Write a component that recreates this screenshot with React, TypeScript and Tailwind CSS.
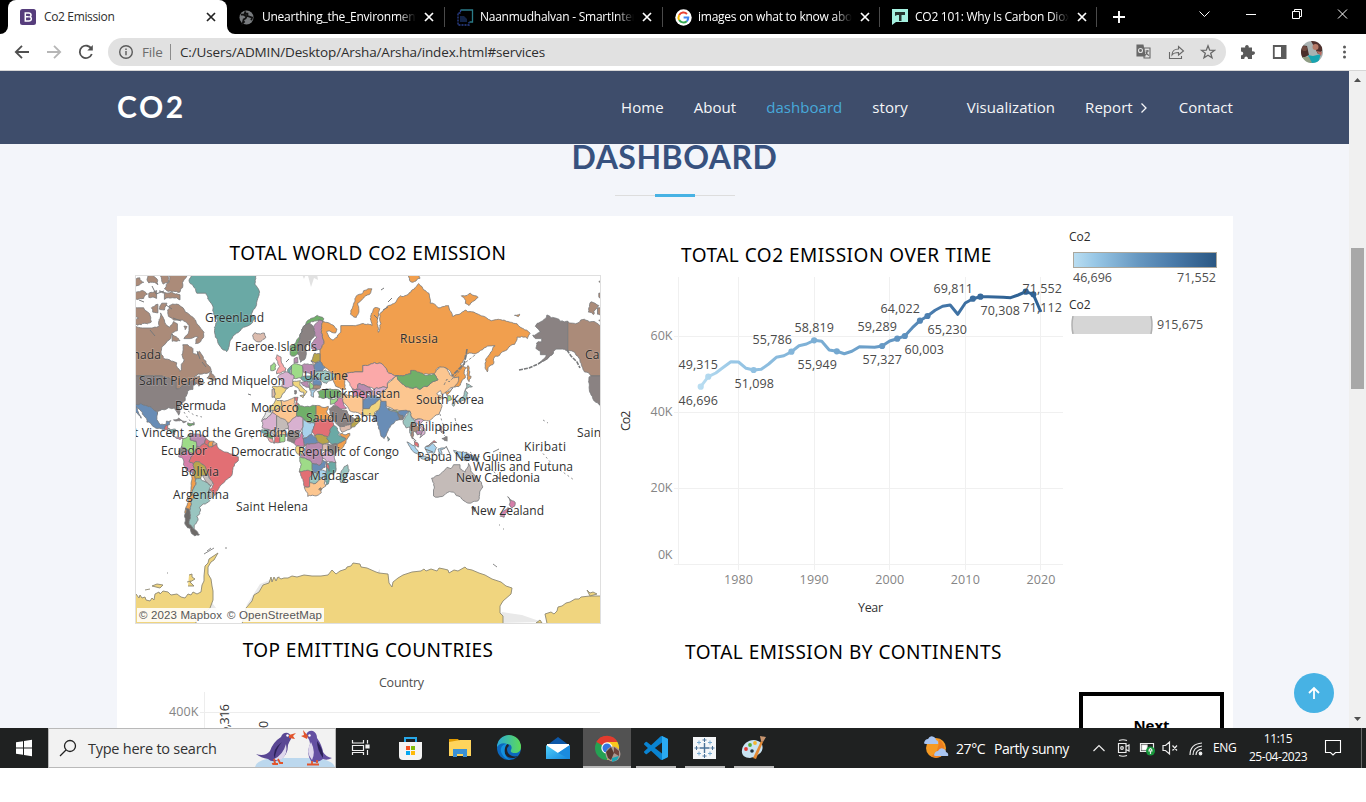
import type { ReactNode } from 'react';

const SEGOE = "font-['Open_Sans','Noto_Sans',sans-serif]";
const NOTO = "font-['Noto_Sans','Open_Sans',sans-serif]";

/* ---------- map data: colour + lon,lat ring ---------- */
const C = {
  brown: '#ab8b79', grey: '#8a8282', blue: '#698db6', teal: '#6aa9a5', orange: '#f19f4e',
  peach: '#fcc690', pink: '#fba9a9', green: '#70af69', red: '#e26f74', aqua: '#99c5c0',
  stone: '#c4bbb8', sand: '#f0d57f', lilac: '#d8b1d0', purple: '#b98bb0', lime: '#9edb88',
  sky: '#a8d2ec', rose: '#d57ea9', olive: '#b8a54b', blush: '#dcbcae',
};

const LAND: [string, string][] = [
  [C.brown, '-141,69.6 -135,69 -131,70 -128,70.2 -124,69.5 -119,69.3 -115,68.3 -109,67.8 -102,67.8 -98,68 -96,68.5 -95,71.8 -92,70 -88,68 -85,69.6 -82,69 -82,67 -86,66.3 -87,64.6 -94,61.5 -94.5,58.8 -92.5,57 -88,56.5 -82.5,55.2 -82,53 -80,51.3 -79,52 -79,54.5 -76.7,56.5 -78.5,58.8 -77.5,60.5 -77.8,62.4 -74,62.4 -70,61 -69.5,59 -67,58.5 -65,60 -63,58.5 -61.5,56.5 -59.5,54.8 -57,53.5 -56,52 -60,50.2 -66,50 -69,48.5 -65,49 -64.5,47.5 -64,46 -61,45.5 -65.5,43.5 -66.8,45 -70,46.5 -75,45 -79,43 -83,42 -83,46 -89,48 -95,49 -123,49 -128,51 -130.5,54.8 -135.5,59.5 -141,60.3'],
  [C.brown, '-61.5,66.5 -64,63.5 -68,62.8 -66,65 -72,64.5 -77,64.5 -73,67 -73,68.5 -78,70 -85,70 -89,71 -88,73.5 -81,73.7 -77,72.7 -73,71.5 -68,70 -67,69'],
  [C.brown, '-92,76.8 -86,76.3 -80,76.2 -78,77 -76,78.5 -72,79.5 -90,79.6 -88,78.3'],
  [C.brown, '-96,76.4 -90,76 -80,75.7 -80,74.7 -92,74.8 -92,76'],
  [C.brown, '-105,79 -100,78.8 -97,77.5 -104,77.8'],
  [C.brown, '-95,78.9 -90,79.2 -89,77.9 -93,77.6'],
  [C.brown, '-117,76 -109,76.5 -105,75.8 -108,75 -117,75.3'],
  [C.brown, '-117,78 -111,78.6 -108,77.9 -114,77.3'],
  [C.brown, '-104,76 -98,76.5 -98,75 -104,75.2'],
  [C.brown, '-118,73 -113,73 -108,73 -105,72 -102,69.5 -105,69 -113,68.6 -117,70 -112,70.5 -118,71.5'],
  [C.brown, '-125,72 -123,74.3 -117,73.5 -121,71.4'],
  [C.brown, '-102,73 -97,73.8 -97,71.8 -101,72'],
  [C.brown, '-94,74 -90,74 -92,72.5 -96,72.7'],
  [C.brown, '-86,66 -84,65.3 -80,63.8 -86,63.6'],
  [C.brown, '-77,68.3 -74.5,68.2 -76,67.3'],
  [C.brown, '-59.2,48 -55.7,51.5 -55.5,50 -53,48.5 -53.5,46.7 -56,47'],
  [C.teal, '-73,78.2 -70,77.4 -67,76 -60,76 -56,74 -54,71.5 -51,70 -53.5,68 -53,66 -51,63.5 -48,61 -44,59.8 -42.5,61.3 -41,64 -38,65.7 -31,68 -25,69 -22,70.5 -25,71.5 -22,73 -20,75 -19,76.5 -22,77.5 -20,79.8 -68,80.2'],
  [C.grey, '-168,65.6 -162,66.5 -166,68.3 -162,69.5 -157,71.3 -150,70.5 -141,69.7 -141,60.3 -146,60.8 -150,60.8 -152,59.2 -155,58 -160,56 -163,55 -159,57 -157.500,58.600 -162,58.6 -162,60 -165.500,61 -165,63 -161,63.500 -161,64.5 -166,64.5'],
  [C.grey, '-124.5,48.5 -123,49 -95,49 -89,48 -83,46 -83,42 -79,43 -75,45 -70,46.5 -67,45 -70,43.5 -70,41.7 -74,40.6 -76,37 -76,35 -81,31.5 -80.2,26.8 -81,25.2 -82.7,28 -84,30 -89,30.3 -91,29.2 -97,28 -97.3,26 -101,29.5 -106.5,31.8 -114.7,32.5 -117,32.6 -120.5,34.6 -124.2,40.5'],
  [C.blue, '-117,32.6 -114.7,32.5 -106.5,31.8 -101,29.5 -97.3,26 -97.8,22 -95,18.6 -91,18.7 -90.5,21 -87,21.4 -88,18.4 -91,17.8 -92,14.7 -96,15.8 -101,17.3 -105.5,20.3 -106,23 -109,26 -112.5,30 -114.6,31.6 -110,24 -110,23 -112,25.5 -115,28.5'],
  [C.red, '-92,14.7 -91,17.8 -89.2,17.8 -89,14'], [C.teal, '-89,16 -83.3,15 -84,11 -87,13'], [C.rose, '-86,11 -82,9 -79,9.5 -77.5,8 -80,7.3 -83,8.3'],
  [C.grey, '-85,21.9 -81,23.2 -75,20.8 -77.5,19.8 -79,21.8'], [C.green, '-74,19.8 -69,19.5 -69,18.3 -74,18.2'],
  [C.lime, '-77.5,8 -72,12 -72,7 -67.5,6 -67,1.5 -70,-4 -75,0 -79,1.5'],
  [C.purple, '-72,12 -68,11.5 -62,10.7 -60,8 -61,4.5 -65,1.5 -67,1.5 -67.5,6 -72,7'],
  [C.red, '-60,8 -57,6 -58,1.5 -61,4.5'], [C.orange, '-57,6 -54,6 -54.5,2 -58,2'], [C.blush, '-54,6 -51.5,4.2 -54.5,2'],
  [C.grey, '-79,1.5 -75,0 -79,-5 -81,-2'],
  [C.rose, '-79,-5 -75,0 -70,-4 -73,-9.5 -69.5,-11 -69,-15 -70,-18 -76,-14 -81,-6 -80,-3.5'],
  [C.red, '-70,-4 -67,1.5 -65,1.5 -61,4.5 -58,1.5 -54.5,2 -51.5,4.2 -50,0 -44,-2.5 -38.5,-4 -35,-6 -35,-9 -39,-14 -40,-20 -45,-23.5 -48.5,-27 -53,-33.5 -57.5,-30 -54,-26 -58,-20 -60,-15 -65,-10 -69.5,-11 -73,-9.5'],
  [C.olive, '-69.5,-11 -65,-10 -60,-15 -58,-19.5 -62.5,-20 -64,-22.5 -68,-22.7 -69.5,-17.5 -69,-15'],
  [C.stone, '-62.5,-20 -58,-20 -54.5,-25.5 -56,-27.3 -58,-26'], [C.stone, '-57.5,-30 -53,-33.5 -56,-35 -58.4,-34'],
  [C.orange, '-70,-18 -69.5,-17.5 -68,-22.7 -70,-30 -71.5,-40 -72,-46 -75.5,-46.5 -73.5,-37 -71.5,-30'],
  ['#6d6a68', '-75.5,-41.5 -73,-42 -72,-46 -73,-50 -69,-52.5 -65,-55 -68.5,-55.5 -71,-54.5 -75,-51'],
  [C.aqua, '-68,-22.7 -64,-22.5 -58,-26 -56,-27.3 -57.5,-30 -58.4,-34 -57,-37 -62,-39 -65,-41 -64,-42.5 -67,-46 -66,-48 -69,-50.5 -69,-52.5 -73,-50 -72,-46 -71.5,-40 -70,-30'],
  [C.blush, '-24,65.5 -22,66.4 -18,66 -15,66.3 -13.7,65 -18,63.4 -22.5,64'],
  [C.pink, '-5.5,50 1.3,51.2 1.7,52.7 0,53.5 -2,56 -2,57.6 -5,58.6 -6,57 -4.5,54.8 -3,53.5 -4.8,52'],
  [C.lime, '-10,51.6 -6.3,52.2 -6,54 -7.5,55.3 -10,54'],
  [C.green, '5,58.6 8,58 11,59 12,64 16,68.5 20,69.2 27,70 30,69.7 31,70.3 26,71.2 19,70 14,67.5 10,64 5,62'],
  [C.grey, '11,59 13,55.4 16,56.5 17,60.5 17.5,62 21,64 24,65.8 23,68 20,69.2 16,68.5 12,64'],
  [C.purple, '21.5,61 25,60.3 28,60.5 31,62.8 29,66.5 30,69.7 27,70 23,68 24,65.8 25.5,65 21.5,62.8'],
  [C.orange, '28,60.5 31,62.8 29,66.5 30,69.7 35,69.2 41,67.5 40,66.3 33,66.7 38,64 44,66.5 44,68.5 54,68.5 60,69 68,68.5 67,71 70,73 74,72.8 72,69 73,66.5 75,69 74,71.5 81,73.5 88,75 98,76.2 104,77.7 112,76 113,74 119,73 127,73.5 130,71 140,72.5 150,71.5 160,69.8 170,70 180,69 190,66.2 188,64.5 180,65 178,62.5 170,60 163,58 162,55 157,51 156,57 163,62 156,61.5 150,59.5 143,59.3 136,54.5 141,53 140,48 135,43.3 131,43 135,48.5 130.5,48.8 125,53 120,53.3 117,49.5 108,49.7 98,51.5 98,50 87,49.2 80,51 77,54 70,55.3 61,54 61,51 55,51 48,50 47,45 48,41.8 40,43.5 38,47 40,49.5 32,53 28,56'],
  [C.orange, '51.5,71.5 56,70.7 58,72 57,74 68,76.8 65,76.8 55,75'], [C.orange, '96,79.2 101,79.5 105,78.5 99,77.9'], [C.orange, '137,75.5 144,76 150,75.2 143,73.5 140,74'],
  [C.orange, '142,54 143.5,51 143,49 144.5,48.8 143,46 142,47 141.8,52'], [C.orange, '178,71.2 182,71.5 181,70.9'],
  [C.lime, '6,54 8,54.8 14,54 15,51 13,48 8,47.7 6,50'], [C.purple, '14,54 18.5,54.7 23.5,54 24,51 22.5,49 15,51'],
  [C.lilac, '-4.7,48.4 2.5,51 8,49 7,46 7,43.7 3,42.5 -1.7,43.3 -1,46'],
  [C.sand, '-9,43 -1.7,43.3 3,42.3 -0.5,39.5 -2,36.8 -5.6,36 -7.5,37.2 -7,41.8'], [C.blush, '-9,41.8 -7,41.8 -7.5,37.2 -9,37'],
  [C.sand, '7,46 13,46.5 12.5,44 18,40.5 16,38 15.5,40 10.5,43 7.5,44'], [C.sand, '12.5,38 15.5,38.2 15,36.7'], [C.grey, '8.3,41 9.7,41 9.5,39 8.5,39'],
  [C.teal, '5,51.5 6,54 4,52.8 3,51.2 6,50'], [C.purple, '8,55 8,57 10.5,57.6 11,55.2'], [C.olive, '21,56 24,59.3 28,59 28,56 24,55'], [C.blush, '21,56 26.5,55.5 24,54'],
  [C.blue, '23.5,54 28,56 32,53 30,51.5 24,51.7'], [C.aqua, '24,51 32,52 40,49.5 38,47 33,45 30,46 27,48 22.5,49'],
  [C.teal, '13,48 17,48.8 22.5,49 22,46 16,46'], [C.blue, '22,48 27,48 29,44 23,44'], [C.purple, '13,45.5 19,46 20,42.5 17,43'], [C.lime, '20,46 23,44 22.5,42 20,42'], [C.sky, '20,41.8 26,41.7 23.5,40.3 23,37 21,38'], [C.brown, '23,44 28.5,43.7 27.5,42 22.5,42'],
  [C.green, '26,40.5 31,41.3 36,42 42,41.5 44.5,39.5 44,37.2 36,36 30,36.3 27,37'],
  [C.pink, '48,50 55,51 61,51 61,54 70,55.3 77,54 80,51 87,49.2 83,47 80,45 80,42.5 70,42 66,43 58,45 56,41.5 53,42 51,45 49,46.5'],
  [C.purple, '56,41.5 58,45 66,43 68,41 67,37.5 61,41'], [C.rose, '53,42 56,41.5 61,41 66,38 62,35.5 57,38 54,37.3'], [C.lilac, '70,42 80,42.5 74,39.5 68,38'],
  [C.peach, '80,45 87,49.2 91,45 97,42.7 105,41.7 112,44 119,47 116,50 121,53.3 126,52.5 131,48 135,48.3 131,43 125,40 121.5,39 121,41 118,39 122.5,37 119.3,35 122,31 120,26 114,22.3 108,21.5 102,22 98,25 97.5,28 92,28 85,28.5 79,31.5 74,39.5 80,42.5'],
  [C.green, '87,49.2 98,50 98,51.7 108,49.7 116,50 119,47 112,44 105,41.7 97,42.7 91,45'],
  [C.blue, '74,34.5 79,34.5 79,31 81,29 88,27 97,28 92,22.5 88,21.7 82,16.5 80,13 77.5,8 73,16 72.5,20.5 69,22 70,26 74,31'],
  [C.sand, '61.5,25.2 67,25 70,24 70,27 74.5,32 74,36 70,33 66,29.7 61,29.7'], [C.blue, '61,35 65,37.3 71,38 74,37 70,33 66,29.7 61,29.7'],
  [C.grey, '88,26.5 92,25 92,22 89,22'], [C.aqua, '92,21 97,28 98.5,24 101,21 98,18 98.5,10 97.5,16.5 94.5,16'], [C.teal, '80,9.5 81.8,7.5 80.5,6'], [C.green, '80.5,30 88,27.8 88,26.5 81,28.7'],
  [C.brown, '98,19 101,19.5 105,16 102.5,12.5 100,13.5 99.5,9 102,6.2 99,8 98.5,14'], [C.lilac, '101,21 104,22.5 108,21.5 105.5,19 109,15 109,11.7 105,8.7 106,11 107.5,14 104,18'], [C.purple, '102.5,14 107.5,14 106,11 103,10.8'],
  [C.lime, '126.5,38 128.5,38 129.5,35.5 126.5,34.5'], [C.orange, '124.5,40 130.5,42.5 127.5,39.5 126,38'],
  [C.aqua, '141,45.3 145.5,43.3 140,41.5'], [C.aqua, '140,41.3 142,39.5 140.5,35.5 136,34 131,33.8 136,36 139,38'], [C.aqua, '130,33.5 132,33.5 131,31.2'],
  [C.peach, '44,39.5 48.5,38.5 54,37.3 57,38 61,36 61,29.7 61.5,25.2 57,27 50,30 46,33.5'],
  [C.rose, '42.5,37 45,36.5 46,33.5 48.5,30 44,29.3 39,33'], [C.lime, '36,36 42.5,37 39,33 36,32.5'],
  [C.grey, '35,29.5 39,32 44,29.3 48.5,28.5 51,25 55,22.5 52,19 47,17 43,17.3 39,21'], [C.blush, '43,17.3 47,17 52,19 52,15.7 45,12.8'], [C.olive, '52,19 55,22.5 56.5,24.5 59.7,22.3 55,17 52,16'],
  [C.sand, '-13,28 -9.8,31.5 -6,35.8 -2,35 -1.5,32.2 -8.5,28.5'], ['#e4e4e4', '-17,21 -13,28 -8.5,27.5 -13,23'],
  [C.peach, '-2,35 8.5,37 8,33 10,30 10,25 3,19.2 -8.5,27 -8.5,28.5 -1.5,32.2'], [C.red, '8.5,37 11,37 10,34 11.3,32.5 9,31'],
  [C.green, '10,24.5 10,30 11.3,33 20,31 25,31.7 25,20 15,23'], [C.orange, '25,31.7 34.5,31.2 33,28 36.5,22 25,22'],
  [C.lilac, '-17,21 -13,23 -8.5,27 -5.5,25 -5.5,15.5 -12,15 -16.5,16'], [C.stone, '-5.5,25 3,19.2 4,16 -3,14 -6,10.5 -11.5,12.5 -12,15 -5.5,15.5'],
  [C.lilac, '3,19.2 10,24.5 15,23 15,17 13,13.7 4,13.5 3.5,16'], [C.sky, '15,23 24,19.5 22,13 15,8 14,13 15,17'],
  [C.red, '25,22 36.5,22 38.5,18 36,13 34,9.5 24,10 22,13 24,19.5'], [C.teal, '36,13 38.5,18 43,12.5 42,11 48,8 42,4.2 36,4.5 33,8'], [C.orange, '43,11.5 51,12 48,4.5 42,-1.5 41,3.5 48,8'],
  [C.teal, '-17,14.7 -12,15 -11.5,12.5 -16.5,12.3'], [C.green, '-15,11 -11.5,12.5 -8,10 -8.5,7.5 -13,9'], [C.pink, '-13,9 -8.5,7.5 -7.5,4.5 -11.5,6.7'], [C.red, '-8,10 -3,10 -3,5 -7.5,4.5'], [C.peach, '-6,10.5 -3,14 1,13 2,11'], [C.lime, '-3,11 1,11 1,6 -3,5'], [C.grey, '2.7,6.5 4,13.5 13,13.7 12,8 8,4.5'],
  [C.rose, '8,4.5 14,13 15,8 16,2.2 10,2.3'], [C.blue, '15,8 22,11 27,5 18,4 16,3'], [C.olive, '24,10 34,9.5 33,8 35,5 30,3.7 27,5'],
  [C.sand, '10,2.3 16,2 18,4 14,-4.5 11,-4 9,-1'], [C.purple, '18,4 27,5 31,3 29,-3 30,-8 28,-12.5 22,-11 18,-8 12.5,-6 16,-3'],
  [C.lime, '12.5,-6 18,-8 22,-11 22,-17.5 12,-17.2 13.5,-12'], [C.red, '12,-17.2 23.5,-17.7 20,-22 20,-28 16,-28.5 14,-22'], [C.aqua, '20,-22 23.5,-17.7 26,-18 29,-22 25,-25.5 20,-26'],
  [C.peach, '16,-28.5 20,-28 20,-25 25,-25.5 29,-22.3 31.5,-23 32.5,-27.5 29,-32 25,-34 18.5,-34.3'], ['#b18352', '27,-29.5 28.5,-28.6 29.2,-29.6 28,-30.5'],
  [C.blue, '22,-11 28,-12.5 30,-8.5 33,-10 32,-14 28,-17 23.5,-17.7 22,-15'], [C.lilac, '30,-3 34,-1 39,-5 40.3,-10.5 33,-10 30,-7'], [C.grey, '34,4 41,3.8 41,-2 39,-4.6 34,-1'], [C.blush, '30,3.5 34,4 34,-1 30,-1'], [C.teal, '33,-11.5 40.3,-10.5 40.5,-15 35,-20 35,-24 32.5,-27 31.5,-22 33,-17'], [C.sky, '25,-17.8 30,-16 33,-17 31.5,-22 28,-21.5'], [C.red, '33,-10 35,-14 35,-17 33,-14'],
  [C.aqua, '49.3,-12 50.3,-15.5 47,-25 44,-25 43.5,-22 44.5,-16.5'],
  [C.sky, '109,1.5 112,1.7 115,4.3 118,1 116,-3.5 111,-3.3'], [C.red, '110,2 115,5 118,5 116,6.5 112,3'], [C.sky, '95,5.5 99,3 104,-2.5 106,-5.8 101,-3 97,2'], [C.red, '100.5,6.5 103,5 104,1.5 101,3'], [C.sky, '105,-6.2 114,-7.5 114,-8.5 106,-7.3'], [C.sky, '119,0 125,1.3 121,-0.5 122.5,-4.5 120,-3 119.5,-5.5'],
  [C.sky, '131,-1 141,-2.6 141,-9 137,-8 133,-4'], [C.blue, '141,-2.6 146,-5 150.5,-10.5 146,-8.3 141,-9'], [C.rose, '120.5,18.3 122,17 121.5,14 124,12.5 120.5,14'], [C.grey, '122,8 126,9.5 126,6 124,6.5'],
  [C.stone, '114,-22 117,-20.5 122,-18 126,-14 129,-15 131,-12 136,-12 136,-15 140,-17.5 142.5,-11 146,-18.5 150,-23 153.5,-28 150,-37 144,-38.5 140,-37.5 136,-34.5 131,-31.5 125,-32.5 119,-34.8 115.5,-34 115.5,-30'], ['#817b78', '145,-41 148,-41 147,-43.5'],
  ['#6d6a68', '172.7,-34.5 175,-36.5 174.5,-37'], [C.rose, '175,-36.5 178.5,-38 176,-41.5 174,-39.5'], [C.rose, '173,-41 174,-42 170,-46.5 167,-46'], [C.rose, '164,-20 167,-22 166,-22.3'],
];

const S = 466.8 / 360;
const px = (lon: number) => 283.7 + lon * S;
const py = (lat: number) => 449 - (466.8 / (2 * Math.PI)) * Math.log(Math.tan(Math.PI / 4 + (lat * Math.PI) / 360));
const noise = (a: number, b: number) => {
  const v = Math.sin(a * 12.9898 + b * 78.233) * 43758.5453;
  return v - Math.floor(v) - 0.5;
};

type Pt = [number, number];
/* Roughens an edge; both neighbours of a shared border get the same points. */
function split(a: Pt, b: Pt, depth: number): Pt[] {
  const dx = Math.abs(b[0] - a[0]);
  const dy = Math.abs(b[1] - a[1]);
  const len = Math.sqrt(dx * dx + dy * dy);
  if (depth === 0 || len < 2.6) return [a];
  const k = Math.min(len * 0.32, 4);
  const m: Pt = [
    (a[0] + b[0]) / 2 + noise(a[0] + b[0], a[1] + b[1]) * k,
    (a[1] + b[1]) / 2 + noise(a[1] + b[1], a[0] + b[0]) * k,
  ];
  return [...split(a, m, depth - 1), ...split(m, b, depth - 1)];
}
function ring(s: string) {
  const pts = s.split(' ').map((p): Pt => {
    const [lon, lat] = p.split(',').map(Number);
    return [px(lon), py(lat)];
  });
  const straight = (a: Pt, b: Pt) => a[1] === b[1] || a[0] === b[0];
  const out = pts.flatMap((p, i) => {
    const q = pts[(i + 1) % pts.length];
    return straight(p, q) ? [p] : split(p, q, 4);
  });
  return 'M' + out.map((p) => p[0].toFixed(1) + ' ' + p[1].toFixed(1)).join('L') + 'Z';
}

const MAP_LABELS: [string, number, number, number][] = [
  ['Greenland', 205, 322, 59], ['Faeroe Islands', 235, 351, 82], ['Russia', 400, 343, 38], ['Canada', 118, 359, 43], ['Canada', 585, 359, 43],
  ['Saint Pierre and Miquelon', 139, 385, 146], ['Ukraine', 304, 380, 44], ['Turkmenistan', 322, 398, 78], ['South Korea', 416, 404, 68],
  ['Bermuda', 175, 410, 51], ['Morocco', 251, 412, 48], ['Saudi Arabia', 306, 422, 72], ['Philippines', 410, 431, 63],
  ['Saint Vincent and the Grenadines', 110, 437, 190], ['Saint Vincent and the Grenadines', 577, 437, 190], ['Kiribati', 524, 451, 42],
  ['Ecuador', 161, 455, 46], ['Democratic Republic of Congo', 231, 456, 168], ['Papua New Guinea', 417, 461, 105], ['Wallis and Futuna', 473, 471, 100],
  ['Bolivia', 181, 476, 38], ['Madagascar', 310, 480, 69], ['New Caledonia', 456, 482, 84], ['Argentina', 173, 499, 56], ['New Zealand', 471, 515, 73], ['Saint Helena', 236, 511, 72],
];

function WorldMap() {
  return (
    <svg viewBox="136 276 464 347" width="464" height="347" className="block bg-white">
      <g id="land" stroke="#77797b" strokeWidth="0.8" strokeLinejoin="round">
        {LAND.map(([fill, s], i) => <path key={i} d={ring(s)} fill={fill} />)}
        <path d="M444 385l3-6 2 3 8-8 9-12 9-7M455 418l1 5 3 4" fill="none" strokeDasharray="3 1.500" />
        <path d="M519 370l10-2 9-4 8-5 7-6M567 350l4 6 6 6 3 6" fill="none" strokeDasharray="4 1" strokeWidth="1.600" />
        <path d="M467 349l-1 7-2 8-6 6-6 6" fill="none" strokeWidth="1.600" strokeDasharray="5 1" />
        <path d="M182 404l6 7 6 4 8 2M251 437l2 3M470 452l5 4 6 1M490 469l8 6M500 470l3 2M184 412l5 8 8 4M440 414l2 8 3 6M441 432l5 5M540 450l12 14M560 470l14 10M543 420l5 3" fill="none" strokeDasharray="2 2.600" />
        <path d="M152 286l4 8 8-3M166 305l6 4M150 330l5 6M173 318l8 3M139 300l5 2M197 351l3 8M202 362l4 5M392 298l-4 4M383 310l5-3M374 315l4 4M381 290l3-2M275 348l1 2M286 362l3-3M296 348l2-4M300 334l3-3M248 394l3 1M406 559l0 0M493 452l6-3M425 449l8 3M446 446l4 8M461 457l8 1" fill="none" strokeWidth="1" />
      </g>
      <use href="#land" x="466.8" />
      <use href="#land" x="-466.8" />
      <path d="M300 270l4 9 3-7 4 15 3-9 4 2-2-12z" fill="#e2e2e2" />
      <path d="M192 612l15-16 12 16zM246 606l14-22 20-8 0 10zM495 623l7-11 20 3 20 7zM376 574l4-5v8z" fill="#e9e9e9" />
      <g fill={C.sand} stroke="#8d8873" strokeWidth="0.9" strokeLinejoin="round">
        <path d="M130 624V593l4 3 2-2 3 4 1-3 2 3 3-1 1 3 4 1 2-3 2 2 1-6 4-2 1 2 3-3 5 1 3 3 6-1 4 3 4 1 3-4 3 1 2-3 4 2 4-2 1-7 2-4 0-5 1-10 3-3 1-4 6-4 3-2-4 7-3 2-3 5 0 7 3 5 1 7 1 5 0 9-3 8-6 6-8 6v10z" />
        <path d="M246 608l6-7 2-6 5-3 4-7 6-2 2-6 1 5 2-5 2 4 2-4 3 2 3-1 4 0 4-2 5 1 7-2 8 1 9 0 7-1 4-5 4 4 4-3 6-2 1-2 4-1 2-3 7 1 1 3 6 1 9 4 3 1 9 1 1 9 3 4 1-5 5-4 5-3 9-3 9-1 3-2 2 2 5-2 6 2 2-3 5 1 4 1 1 3 5-3 4 1 7-4 2 2 5 1 7 3 6 2 7 4 9 3 5 4 6 2-1 6-8 7-3 5 0 7 3 3 0 8-2 8H240z" />
        <path d="M548 628l-3-14 6-2 3 2 3-3 1-4 4-1 4-3 4-1 5-3 4 0 2-2 9-1 12 0v36zM536 623l4-3 2 3z" />
        <path d="M152 586l5-2 6 1-3 3zM587 590l3 3 3-1 4 2-7 2zM189 575l3-1 0 3 3 2-5 3 4 4-6 0M187 582l4-1M145 590l5-1" fill={C.sand} />
      </g>
      <path d="M204 554l10-6M207 551l4-3M225 548l2 0M493 564l4 3M167 573h1M499 525h1M503 529h1" stroke="#8b8b8b" fill="none" />
      <g className="font-['Open_Sans','Noto_Sans',sans-serif] text-[12px]" fill="#2f2f2f" stroke="#ffffff" strokeOpacity="0.2" strokeWidth="1.300" paintOrder="stroke">
        {MAP_LABELS.map(([t, x, y, w], i) => <text key={i} x={x} y={y} textLength={w}>{t}</text>)}
      </g>
      <rect x="137" y="608" width="187" height="14" fill="#fff" fillOpacity="0.88" />
      <g className="font-['Liberation_Sans',sans-serif] text-[11.5px]" fill="#575757">
        <text x="139" y="619" textLength="83">© 2023 Mapbox</text>
        <text x="227" y="619" textLength="95">© OpenStreetMap</text>
      </g>
    </svg>
  );
}

/* line heights, one entry per year from 1975 */
const SERIES = [386.7, 376.7, 373, 367.3, 361.7, 362, 368.3, 370, 369.3, 364, 357.3, 355.7, 351.7, 345.7, 344, 340.3, 341.3, 350, 351.3, 353.7, 351.3, 346.7, 347, 347.3, 346, 341, 338.7, 336, 327.7, 320.7, 316, 310.3, 306.3, 305, 314.3, 303, 298.7, 296.7, 296.7, 297, 297.3, 297.7, 295, 291.7, 294.3, 312];
const YX = (i: number) => 700.7 + i * 7.56;
const MARKS = [0, 1, 7, 12, 15, 18, 24, 26, 27, 29, 30, 36, 37, 43, 44];
const POINT_LABELS: [string, number, number][] = [
  ['49,315', 678.5, 369], ['46,696', 678.5, 405], ['51,098', 734.5, 388], ['55,786', 752.5, 344], ['58,819', 794.5, 332], ['55,949', 797.5, 369],
  ['57,327', 862.5, 364], ['59,289', 857.5, 331], ['60,003', 904.5, 354], ['64,022', 880.5, 313], ['65,230', 927.5, 334], ['69,811', 933.5, 293],
  ['70,308', 980.5, 315], ['71,552', 1022.5, 293], ['71,112', 1022.5, 312],
];

function LineChart() {
  return (
    <svg viewBox="610 270 460 360" width="460" height="360" className="block">
      <defs>
        <linearGradient id="trend" gradientUnits="userSpaceOnUse" x1="700" y1="0" x2="1041" y2="0">
          <stop offset="0" stopColor="#b9ddf1" /><stop offset="0.1" stopColor="#98c7e6" /><stop offset="0.4" stopColor="#74a8d0" />
          <stop offset="0.6" stopColor="#5f92bf" /><stop offset="0.7" stopColor="#4577a9" /><stop offset="0.9" stopColor="#2f6294" /><stop offset="1" stopColor="#2f6294" />
        </linearGradient>
      </defs>
      <path d="M678.5 277V564.5M738.5 277V570M814.5 277V570M889.5 277V570M965.5 277V570M1040.5 277V570M674 336.5H1063M674 412.5H1063M674 488.5H1063M674 564.5H1063" stroke="#f0f0f0" fill="none" />
      <polyline points={SERIES.map((y, i) => YX(i).toFixed(1) + ',' + y).join(' ')} fill="none" stroke="url(#trend)" strokeWidth="3" strokeLinejoin="round" />
      {MARKS.map((i) => <circle key={i} cx={YX(i)} cy={SERIES[i]} r="3.1" fill="url(#trend)" />)}
      <g className="font-['Open_Sans','Noto_Sans',sans-serif] text-[12.5px]">
        <g fill="#4a4a4a">{POINT_LABELS.map(([t, x, y]) => <text key={t} x={x} y={y} textLength="39.5">{t}</text>)}</g>
        <g fill="#858585">
          <text x="650.5" y="340" textLength="22">60K</text><text x="650.5" y="416" textLength="22">40K</text>
          <text x="650.5" y="492" textLength="22">20K</text><text x="658" y="559" textLength="14.5">0K</text>
          {[1980, 1990, 2000, 2010, 2020].map((y, i) => <text key={y} x={724 + i * 75.6} y="584" textLength="29">{y}</text>)}
        </g>
        <text x="858" y="612" textLength="25" fill="#333">Year</text>
        <text transform="translate(630 431) rotate(-90)" textLength="20.5" fill="#333">Co2</text>
      </g>
    </svg>
  );
}

/* ---------- browser chrome ---------- */
function Cross({ c }: { c: string }) {
  return <svg width="10" height="10" viewBox="0 0 10 10" className="shrink-0"><path d="M1 1l8 8M9 1L1 9" stroke={c} strokeWidth="1.7" /></svg>;
}

function Tab({ icon, title, width }: { icon: ReactNode; title: string; width: string }) {
  return (
    <div className={`flex h-full items-center ${width}`}>
      <div className="ml-3 w-4">{icon}</div>
      <div className={`ml-[7px] w-[154px] overflow-hidden whitespace-nowrap text-[12px] tracking-[-0.25px] text-white [mask-image:linear-gradient(to_right,black_88%,transparent)] ${SEGOE}`}>{title}</div>
      <div className="ml-2"><Cross c="#fff" /></div>
      <div className="ml-auto h-5 w-px bg-[#4a4a4a]" />
    </div>
  );
}

function TabStrip() {
  return (
    <div className="flex h-[34px] items-center bg-black">
      <div className="h-full w-2 bg-white"><div className="h-full rounded-br-lg bg-black" /></div>
      <div className={`flex h-full w-[219px] items-center rounded-t-lg bg-white pl-3 text-[12px] tracking-[-0.35px] text-[#2e2e2e] ${SEGOE}`}>
        <svg width="16" height="16" viewBox="0 0 16 16"><rect width="16" height="16" rx="2.5" fill="#563d7c" /><path d="M5.3 4h3.4c3 0 3 3.6.6 3.8 3 .2 2.600 4.200-.5 4.200H5.300zM5.300 7.700h3.500" fill="none" stroke="#fff" strokeWidth="1.5" /></svg>
        <span className="ml-2 w-[154px]">Co2 Emission</span><span className="ml-[8px]"><Cross c="#222" /></span>
      </div>
      <div className="h-full bg-white">
        <div className="flex h-full rounded-bl-lg bg-black">
          <Tab width="w-[218px]" title="Unearthing_the_Environment" icon={<svg width="15" height="15" viewBox="0 0 16 16"><circle cx="8" cy="8" r="7.500" fill="#787b7e" /><path d="M2 5l3 0 3 2-1 2-2 1-1 4 2-2M7 1.500l-1 2.500 3 0 0 2 2 1 3 1-1 3" stroke="#111" strokeWidth="1.900" fill="none" /></svg>} />
          <Tab width="w-[218px]" title="Naanmudhalvan - SmartInter" icon={<svg width="17" height="17" viewBox="0 0 17 17" fill="none"><path d="M3.500 1h12v12h-3" stroke="#2b7b88" strokeWidth="1.300" /><path d="M3.500 1v3H1v12h11v-3" stroke="#2c4291" strokeWidth="1.300" strokeDasharray="2 1" /><path d="M3 7h4l3 3v3H3z" fill="#132346" /></svg>} />
          <Tab width="w-[217px]" title="images on what to know abo" icon={<svg width="17" height="17" viewBox="0 0 17 17" fill="none"><circle cx="8.500" cy="8.500" r="8.200" fill="#fff" /><path d="M12 5A5 5 0 0 0 4.200 6" stroke="#ea4335" strokeWidth="2" /><path d="M4.200 6a5 5 0 0 0 0 5" stroke="#fbbc05" strokeWidth="2" /><path d="M4.200 11a5 5 0 0 0 7.600 1.200" stroke="#34a853" strokeWidth="2" /><path d="M11.800 12.200c1.300-1.200 1.500-2.200 1.500-3.600H8.600" stroke="#4285f4" strokeWidth="2" /></svg>} />
          <Tab width="w-[217px]" title="CO2 101: Why Is Carbon Diox" icon={<svg width="16" height="16" viewBox="0 0 16 16"><path d="M0 0h16v13H4l-4 3z" fill="#a5f1e0" /><path d="M3 3h10v3h-3.500v6H7V6H5l-2 1z" fill="#26352f" /></svg>} />
        </div>
      </div>
      <svg width="269" height="34" viewBox="0 0 269 34" className="ml-auto" stroke="#fff" fill="none">
        <path d="M16 17h12M22 11v12" strokeWidth="1.900" /><path d="M102.500 11.500l5 5 5-5M149 14.500h10" />
        <path d="M195.500 11.500h7v7h-7zM197.500 11.500v-2h7v7h-2M241 9.500l9 9M250 9.500l-9 9" />
      </svg>
    </div>
  );
}

function Toolbar() {
  return (
    <div className="flex h-[37px] items-center border-b border-[#d6d6d6] bg-white">
      <svg width="108" height="36" viewBox="0 0 108 36" fill="none" strokeWidth="1.800">
        <path d="M29 18H16.500M22 11.800L15.800 18l6.200 6.200" stroke="#505050" /><path d="M47 18h12.500M54 11.800l6.200 6.200-6.200 6.200" stroke="#b6b6b6" />
        <path d="M91.500 15a6.200 6.200 0 1 0 .3 5" stroke="#505050" /><path d="M92.800 11v5.500h-5.500z" fill="#505050" />
      </svg>
      <div className={`flex h-7 w-[1118px] items-center rounded-full bg-[#e1e1e1] pl-[11px] pr-[10px] text-[14px] text-[#2d2d2d] ${SEGOE}`}>
        <svg width="14" height="14" viewBox="0 0 14 14" fill="none" stroke="#5b5b5b" strokeWidth="1.400"><circle cx="7" cy="7" r="6.300" /><path d="M7 6v4.300M7 3.400v1.500" /></svg>
        <span className="ml-[9px] w-[21px] text-[13.500px] tracking-[-0.2px] text-[#6c6c6c]">File</span>
        <span className="ml-[7px] h-4 w-px bg-[#8c8c8c]" />
        <span className="ml-[9px] whitespace-nowrap text-[13.5px] tracking-[-0.14px]">C:/Users/ADMIN/Desktop/Arsha/Arsha/index.html#services</span>
        <svg width="80" height="18" viewBox="0 0 80 18" className="ml-auto" fill="none" stroke="#686868" strokeWidth="1.100">
          <path d="M1 2h6l2 11H1z" fill="#686868" /><path d="M8 5h6v10H8zM9.500 8h3.500M11.200 7v1.500c0 1.500-1 3-2 3.500M9.800 9c1 2 2 3 3.200 3.500" /><circle cx="4.500" cy="7.500" r="2" stroke="#e1e1e1" />
          <path d="M33.500 9v6.500h12V13M36 12c0-4 3-6 6.500-6V3.500L47.500 8l-5 4V9.500c-3 0-5 .5-6.500 2.500z" />
          <path d="M72 2.800l1.700 4.400 4.700.2-3.700 2.900 1.300 4.500-4-2.600-4 2.600 1.300-4.500-3.700-2.900 4.700-.2z" strokeWidth="1.300" />
        </svg>
      </div>
      <svg width="140" height="36" viewBox="0 0 140 36">
        <path d="M16 13.500h3.200c-1-3.500 4.500-3.500 3.500 0h3.300v4c4-1 4 4 0 3.500V25h-4c.3-3.500-4-3.500-3.700 0H15v-3.800c3 .2 3-3.800 0-3.800v-4z" fill="#5a5a5a" />
        <path d="M47.800 12h11.800v12H47.800z" fill="none" stroke="#5a5a5a" strokeWidth="1.800" /><path d="M55 12h5v12h-5z" fill="#5a5a5a" />
        <clipPath id="face"><circle cx="86" cy="18" r="11" /></clipPath>
        <g clipPath="url(#face)"><path d="M75 7h22v22H75z" fill="#a9b2b2" /><path d="M75 11l6 1 2 9-8 4z" fill="#4a2e2a" /><circle cx="78.500" cy="14.500" r="2.600" fill="#6f4a40" /><path d="M85 7h11v10l-4 3z" fill="#50302c" /><circle cx="89.500" cy="13" r="3" fill="#b67a68" /><path d="M82 21l5 1 8-2-3 9H84z" fill="#18a4b0" /><path d="M76 23l7 0 3 6H76z" fill="#8f9d83" /><path d="M90 17l6 1-1 4z" fill="#b66a60" /></g>
        <g fill="#5a5a5a"><circle cx="118.500" cy="13" r="1.500" /><circle cx="118.500" cy="18" r="1.500" /><circle cx="118.500" cy="23" r="1.500" /></g>
      </svg>
    </div>
  );
}

/* ---------- page ---------- */
function SiteHeader() {
  return (
    <header className="flex h-[73px] shrink-0 items-center bg-[#3e4d6b] pl-[117px] pr-[116px] text-[15px] font-medium tracking-[0.05px] text-[#f5f6f8] font-['Open_Sans',sans-serif]">
      <span className="-mt-[3px] mr-auto text-[30px] font-bold tracking-[2.6px] text-white font-['Lato',sans-serif]">CO2</span>
      <span>Home</span><span className="ml-[30px]">About</span><span className="ml-[30px] text-[#47a9da]">dashboard</span>
      <span className="ml-[30px]">story</span><span className="ml-[59px]">Visualization</span><span className="ml-[30px]">Report</span>
      <svg width="8" height="12" viewBox="0 0 8 12" className="ml-[7px]"><path d="M1.500 1.500L6 6l-4.500 4.500" fill="none" stroke="#f5f6f8" strokeWidth="1.300" /></svg>
      <span className="ml-[31px]">Contact</span>
    </header>
  );
}

function Legend() {
  return (
    <div className={`flex w-[164px] flex-col text-[12.5px] text-[#4e4e4e] ${SEGOE}`}>
      <div className="mt-[12px] h-[18px] text-[12px] leading-[18px] text-[#2c2c2c]">Co2</div>
      <div className="ml-1 mt-[6px] h-4 w-[144px] border border-[#aba79c] bg-[linear-gradient(to_right,#b9ddf1,#98c7e6_15%,#6798c1_45%,#497aa9_70%,#2a5783)]" />
      <div className="ml-1 mt-[1px] flex h-[18px] w-[143px] justify-between leading-[18px]"><span>46,696</span><span>71,552</span></div>
      <div className="mt-[9px] h-[18px] text-[12px] leading-[18px] text-[#2c2c2c]">Co2</div>
      <div className="mt-[2px] flex items-center">
        <svg width="86" height="18" viewBox="0 0 86 18"><path d="M4 0h78q2 9 0 18H4Q2 9 4 0z" fill="#d6d6d6" /><path d="M4 0Q2 9 4 18M82 0q2 9 0 18" fill="none" stroke="#b0b0b0" strokeWidth="1.500" /></svg>
        <span className="ml-[2px] leading-[18px]">915,675</span>
      </div>
      <button className="ml-[10px] mt-[358px] h-[66px] w-[145px] border-4 border-black bg-white text-[15px] font-bold text-black">Next</button>
    </div>
  );
}

function Dashboard() {
  const title = `whitespace-nowrap text-[19px] leading-[26px] text-black ${NOTO}`;
  return (
    <div className="mx-[116px] ml-[117px] flex h-[512px] items-start overflow-hidden bg-white">
      <section className="ml-[18px] w-[466px] shrink-0">
        <h3 className={`mt-[24px] text-center tracking-[0.42px] ${title}`}>TOTAL WORLD CO2 EMISSION</h3>
        <div className="mt-[9px] border border-[#dfdfdf]"><WorldMap /></div>
        <h3 className={`mt-[13px] text-center tracking-[0.42px] ${title}`}>TOP EMITTING COUNTRIES</h3>
        <svg viewBox="135 663 466 65" width="466" height="65" className="block font-['Open_Sans',sans-serif] text-[12.5px]">
          <path d="M204.500 692v36M200 712.500h400" stroke="#ededed" />
          <text x="379" y="687" textLength="45" fill="#4e4e4e">Country</text><text x="169" y="716" textLength="29.500" fill="#858585">400K</text>
          <text transform="translate(229 747) rotate(-90)" textLength="43" fill="#333">416,316</text><text transform="translate(268 728) rotate(-90)" fill="#333">0</text>
        </svg>
      </section>
      <section className="ml-[9px] w-[459px] shrink-0">
        <h3 className={`ml-[71px] mt-[26px] tracking-[0.5px] ${title}`}>TOTAL CO2 EMISSION OVER TIME</h3>
        <div className="mt-[2px]"><LineChart /></div>
        <h3 className={`ml-[75px] mt-[9px] tracking-[0.5px] ${title}`}>TOTAL EMISSION BY CONTINENTS</h3>
      </section>
      <Legend />
    </div>
  );
}

/* ---------- taskbar ---------- */
function Penguins() {
  return (
    <svg width="80" height="38" viewBox="0 0 80 38" className="ml-auto">
      <path d="M0 38q1-7 18-9h42q18 2 20 9z" fill="#bcd8ee" />
      <path d="M1 25q9 3 14-3 3-9 11-14 2-5 7-4 4 2 3 6-2 3-3 6 0 10-8 15-8 3-12-1-7-1-12-5z" fill="#5a4794" />
      <path d="M19 30q9-4 12-15 2 10-4 15-4 3-8 0z" fill="#ded7ec" /><path d="M27 13q-7 8-7 17-4-9 7-17z" fill="#2c2259" />
      <path d="M34 6l7-2-3 3 2 3-6-1z" fill="#e2552c" /><circle cx="32.500" cy="6.500" r="1.200" fill="#fff" /><path d="M19 30l1 4-3 1M23 30l2 4 3 0M18 35h5" stroke="#e2552c" strokeWidth="1.800" fill="none" />
      <path d="M51 6q2-5 7-4 4 2 4 7 5 7 6 14 3 5 9 6-5 3-9 1-6 5-12 2-5-7-1-17 0-4-4-9z" fill="#6450a2" />
      <path d="M56 13q-6 10 1 18 4-8-1-18z" fill="#ded7ec" /><path d="M62 12q7 9 6 17-6-8-6-17z" fill="#2c2259" />
      <path d="M53 7l-5-6 1 5-3 1 6 3z" fill="#e2552c" /><circle cx="54.500" cy="6.500" r="1.200" fill="#fff" /><path d="M57 32v3M62 31v3M52 35.500h12" stroke="#e2552c" strokeWidth="1.800" fill="none" />
    </svg>
  );
}

function TaskIcons() {
  return (
    <svg width="450" height="40" viewBox="336 728 450 40">
      <defs>
        <linearGradient id="eg" x1="0" y1="0" x2="1" y2="0"><stop offset="0" stopColor="#2aa9d8" /><stop offset="1" stopColor="#5ddb57" /></linearGradient>
        <linearGradient id="mg" x1="0" y1="0" x2="1" y2="1"><stop offset="0" stopColor="#52d2fb" /><stop offset="1" stopColor="#1485dd" /></linearGradient>
      </defs>
      <g stroke="#efefef" fill="none" strokeWidth="1.200"><path d="M352.500 740v3h11v-3M352.500 755v-2.500h11v2.500M352.500 745.500h11v5h-11zM367.500 740v3.500M367.500 750v5" /><path d="M366 745h3v3h-3z" fill="#efefef" /></g>
      <path d="M405 744v-6h11v6" fill="none" stroke="#27a7e8" strokeWidth="2" /><path d="M399 742h23v14q0 4-4 4h-15q-4 0-4-4z" fill="#f4f4f4" />
      <path d="M406 746h4v4h-4z" fill="#f35325" /><path d="M411 746h4v4h-4z" fill="#81bc06" /><path d="M406 751h4v4h-4z" fill="#05a6f0" /><path d="M411 751h4v4h-4z" fill="#ffba08" />
      <path d="M449 739h9l2 3h-11z" fill="#e19b00" /><path d="M449 742l11-2h11v16h-22z" fill="#ffd45c" /><path d="M453 757v-8h14v8h-4v-3h-6v3z" fill="#3b91d6" />
      <circle cx="509" cy="748" r="12" fill="#0c68bd" /><path d="M497 747a12 12 0 0 1 24 0c0 4-3 6-6 6s-5-1-4-3c2-4-1-6-4-6-4-2-8 0-10 3z" fill="url(#eg)" /><path d="M508 744c-4 1-6 6-3 10 3 5 10 5 13 2-4 1-8 0-10-3-1-2-2-5 1-7z" fill="#20222a" /><path d="M507 744c-5 0-8 5-5 10 2 4 6 6 9 6-7-2-8-11-4-16z" fill="#1390df" />
      <path d="M546 746l12-9 12 9v2h-24z" fill="#0d58a8" /><path d="M547 744h22v2l-9 7h-4l-9-7z" fill="#fff" /><path d="M546 745l12 8 12-8v14h-24z" fill="url(#mg)" /><path d="M570 745l-12 8 12 6z" fill="#1b8bdf" />
      <path d="M583 728h48v40h-48z" fill="#525252" /><circle cx="607" cy="748" r="12" fill="#25a153" /><path d="M596.500 742A12 12 0 0 1 617.500 742H607z" fill="#e33b2e" /><path d="M607 748l-10.500-6A12 12 0 0 1 607 736l6 7z" fill="#e33b2e" /><path d="M617.400 742A12 12 0 0 1 607 760l6-12-6-6z" fill="#f9c61d" /><circle cx="607" cy="748" r="5.700" fill="#fff" /><circle cx="607" cy="748" r="4.500" fill="#3576e0" />
      <circle cx="613" cy="754" r="7.500" fill="#a99891" /><path d="M606 752l5-5 3 6-3 7-3-2z" fill="#583830" /><path d="M614 747l5 4 0 5-5-3z" fill="#6f453d" /><path d="M612 758l7-2-2 4-5 2z" fill="#1aa6b5" />
      <g transform="translate(644 736)"><path d="M23.150 2.587L18.210.210a1.494 1.494 0 0 0-1.705.290l-9.460 8.630-4.120-3.128a.999.999 0 0 0-1.276.057L.327 7.261A1 1 0 0 0 .326 8.740L3.899 12 .326 15.260a1 1 0 0 0 .001 1.479L1.650 17.940a.999.999 0 0 0 1.276.057l4.120-3.128 9.460 8.630a1.492 1.492 0 0 0 1.704.290l4.942-2.377A1.500 1.500 0 0 0 24 20.060V3.939a1.500 1.500 0 0 0-.850-1.352zm-5.146 14.861L10.826 12l7.178-5.448v10.896z" fill="#0a84d2" /><path d="M18 .100L24 3v18l-6 2.900z" fill="#2aaaf2" /></g>
      <path d="M693 737h23v22h-23z" fill="#f4f6f8" /><g stroke="#4a7298" fill="none"><path d="M704.500 743v10M699.500 748h10" strokeWidth="1.400" /><path d="M704.500 738v4M702.500 740h4M704.500 754v4M702.500 756h4M696.500 746v4M694.500 748h4M712.500 746v4M710.500 748h4" /><path d="M699 740.500v4M697 742.500h4M710 740.500v4M708 742.500h4M699 751.500v4M697 753.500h4M710 751.500v4M708 753.500h4" stroke="#78aad0" /></g>
      <path d="M742 750c1-7 9-12 16-9 6 2 6 10 1 13-3 2-4 3-9 4-5 0-9-3-8-8z" fill="#c9e3f2" /><circle cx="746" cy="749" r="1.900" fill="#e33832" /><circle cx="750" cy="745" r="1.900" fill="#53ac36" /><circle cx="755" cy="743" r="1.900" fill="#f4b52d" /><circle cx="752" cy="751" r="1.800" fill="#23333e" /><path d="M753 758l8-17 2 1-7 17z" fill="#e38a35" /><path d="M761 741l-1-5 6 1-3 5z" fill="#c99670" />
      <path d="M583 766h48v2h-48zM636 766h40v2h-40zM685 766h40v2h-40zM734 766h40v2h-40z" fill="#b9b9b9" />
    </svg>
  );
}

function Taskbar() {
  return (
    <div className={`flex h-10 items-center bg-[#1f2121] text-white ${SEGOE}`}>
      <svg width="48" height="40" viewBox="0 0 48 40" fill="#fff"><path d="M16 14.200l7-1v6.300h-7zM24 13l8-1.200v7.700h-8zM16 20.500h7v6.300l-7-1zM24 20.500h8v7.700L24 27z" /></svg>
      <div className="flex h-10 w-[288px] items-center border border-[#b9b9b9] bg-[#f2f2f2] text-[15px] text-[#333]">
        <svg width="18" height="18" viewBox="0 0 18 18" className="ml-[10px]" fill="none" stroke="#222" strokeWidth="1.300"><circle cx="11" cy="7" r="5.500" /><path d="M7 11l-6 6" /></svg>
        <span className="ml-[11px] mt-px whitespace-nowrap text-[14.500px] tracking-[-0.250px]">Type here to search</span>
        <Penguins />
      </div>
      <TaskIcons />
      <svg width="26" height="24" viewBox="0 0 26 24" className="ml-[138px]">
        <circle cx="12" cy="12" r="10" fill="#f69a23" /><path d="M15 3q8 6 4 16-6 5-12 1 8-3 8-17z" fill="#ed7f20" /><path d="M0 7q1-4 4-4 2-4 6-2 2 1 2 3 3 1 2 4H2q-2 0-2-1zM10 19q1-4 4-4 2-4 6-2 2 1 2 3 3 1 2 4H12q-2 0-2-1z" fill="#a9c5f1" />
      </svg>
      <span className="ml-[6px] w-[30px] whitespace-nowrap text-[14px] tracking-[-0.400px]">27°C</span>
      <span className="ml-[8px] w-[75px] whitespace-nowrap text-[14px] tracking-[-0.480px]">Partly sunny</span>
      <svg width="120" height="40" viewBox="1085 728 120 40" className="ml-[16px]" fill="none" stroke="#ececec" strokeWidth="1.200">
        <path d="M1093.500 751l5.500-5.500 5.500 5.500M1118.500 743.500h7.500v9h-7.500zM1126 746.500l3-1.500v6l-3-1.500M1119 740.500q4-1.500 8 0M1119 755.500q4 1.500 8 0" /><circle cx="1122" cy="748" r="1.300" />
        <path d="M1140.500 743.500h13v8h-13z" /><path d="M1142 745h5v5h-5z" fill="#fff" /><circle cx="1150.500" cy="751" r="4.500" fill="#16963a" stroke="none" /><path d="M1150.500 754v-3M1149 751q0-2 1.500-2.500 1.500.500 1.500 2.500z" />
        <path d="M1163 745.500h2.500l4-3.500v12l-4-3.500h-2.500zM1172.500 745.500l4.500 5M1177 745.500l-4.500 5" /><path d="M1190 755q0-11 12-12M1193 755q0-8 9-9M1196 755q0-5 6-6" /><circle cx="1200.500" cy="753.500" r="1.300" fill="#fff" />
      </svg>
      <span className="ml-[8px] w-[24px] text-[12px] tracking-[-0.400px]">ENG</span>
      <div className="ml-[11px] flex w-[60px] flex-col items-center whitespace-nowrap text-[12px] leading-[18px] tracking-[-0.450px]"><span>11:15</span><span>25-04-2023</span></div>
      <svg width="18" height="18" viewBox="0 0 18 18" className="ml-[16px]"><path d="M1.500 1.500h15v12h-5L9 16l-2.500-2.500h-5z" fill="none" stroke="#fff" strokeWidth="1.100" /></svg>
      <div className="ml-auto mr-1 h-10 w-px bg-[#686868]" />
    </div>
  );
}

export default function App() {
  return (
    <div className="h-[802px] w-[1366px] overflow-hidden bg-white">
      <TabStrip />
      <Toolbar />
      <main className="flex h-[657px]">
        <div className="relative flex w-[1349px] flex-col overflow-hidden bg-[#f3f5fa]">
          <SiteHeader />
          <div className="flex h-[72px] shrink-0 flex-col items-center">
            <h2 className="-mt-[6px] text-[32px] font-bold leading-[38px] tracking-[0.500px] text-[#37517e] font-['Lato',sans-serif]">DASHBOARD</h2>
            <div className="mt-[18px] flex h-[3px] w-[120px] items-center justify-center bg-[linear-gradient(#ddd,#ddd)] bg-[length:100%_1px] bg-center bg-no-repeat"><div className="h-[3px] w-10 bg-[#47b2e4]" /></div>
          </div>
          <Dashboard />
          <div className="absolute bottom-[15px] right-[15px] flex size-10 items-center justify-center rounded-full bg-[#47b2e4]">
            <svg width="14" height="14" viewBox="0 0 14 14"><path d="M7 13V2M2 7l5-5 5 5" fill="none" stroke="#fff" strokeWidth="1.800" /></svg>
          </div>
        </div>
        <div className="flex w-[17px] flex-col items-center bg-[#f0f0f0]">
          <svg width="17" height="17" viewBox="0 0 17 17"><path d="M5 11l3.500-4 3.500 4z" fill="#505050" /></svg>
          <div className="mt-[160px] h-[141px] w-[13px] bg-[#a8a8a8]" />
          <svg width="17" height="17" viewBox="0 0 17 17" className="mt-auto"><path d="M5 6l3.500 4 3.500-4z" fill="#505050" /></svg>
        </div>
      </main>
      <Taskbar />
    </div>
  );
}
